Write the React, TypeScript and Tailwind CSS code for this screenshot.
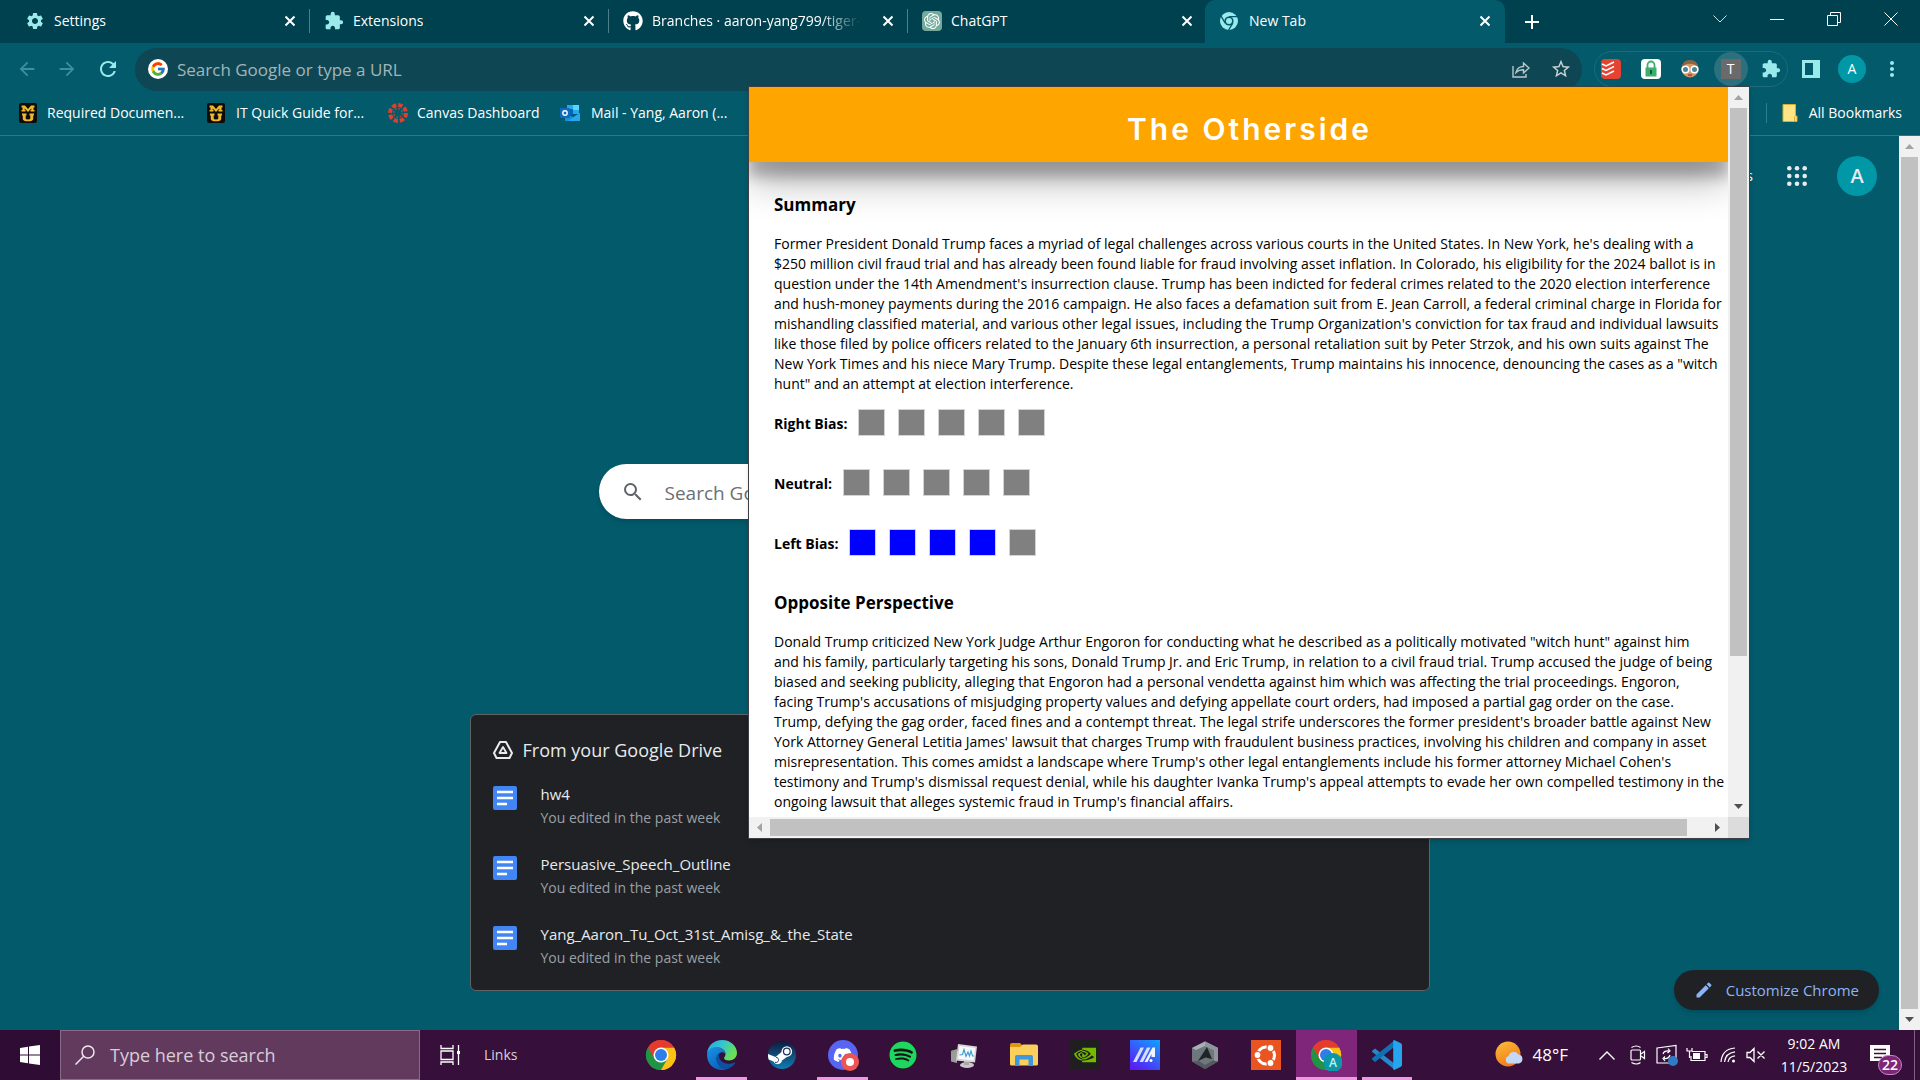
import React from "react";
import { FaGithub, FaDiscord, FaSpotify } from "react-icons/fa";
import { FcGoogle } from "react-icons/fc";
import {
  MdArrowBack,
  MdArrowForward,
  MdEdit,
  MdExtension,
  MdMoreVert,
  MdRefresh,
  MdSearch,
  MdSettings,
  MdStarBorder,
} from "react-icons/md";
import { SiOpenai, SiNvidia } from "react-icons/si";

/* ---------- icons ---------- */

function CloseX() {
  return (
    <svg viewBox="0 0 12 12" className="size-3" fill="none" stroke="currentColor" strokeWidth="2">
      <path d="M1.500 1.500l9 9M10.500 1.500l-9 9" />
    </svg>
  );
}

function ChromeMono() {
  return (
    <svg viewBox="0 0 20 20" className="size-5">
      <circle cx="10" cy="10" r="9" fill="#9aeaec" />
      <circle cx="10" cy="10" r="4.600" fill="#035a6b" />
      <circle cx="10" cy="10" r="3" fill="#9aeaec" />
      <path d="M10 5.600h8.400M6.200 12.200L2 5M13.800 12.200L9.600 19" stroke="#035a6b" strokeWidth="1.400" />
    </svg>
  );
}

function ChromeLogo({ badge = false }: { badge?: boolean }) {
  return (
    <svg viewBox="0 0 32 32" className="size-8">
      <path d="M16 16L3 8.500A15 15 0 0 1 29 8.500Z" fill="#e33b2e" />
      <path d="M16 16L3 8.500A15 15 0 0 0 16 31Z" fill="#229342" />
      <path d="M16 16L29 8.500A15 15 0 0 1 16 31Z" fill="#fbc116" />
      <path d="M16 8.500H29A15 15 0 0 1 16 31L22.500 19.700Z" fill="#fbc116" />
      <path d="M3 8.500L9.500 19.700 16 23.500 22.500 19.700 16 31A15 15 0 0 1 3 8.500Z" fill="#229342" />
      <path d="M3 8.500A15 15 0 0 1 29 8.500H16L9.500 19.500Z" fill="#e33b2e" />
      <circle cx="16" cy="16" r="7.500" fill="#fff" />
      <circle cx="16" cy="16" r="6" fill="#2f7de9" />
      {badge && (
        <>
          <circle cx="23" cy="23.500" r="9.500" fill="#0b97a7" />
          <text x="23" y="28" textAnchor="middle" fontSize="12" fontWeight="600" fill="#c9eef2" fontFamily="Open Sans">
            A
          </text>
        </>
      )}
    </svg>
  );
}

function EdgeLogo() {
  return (
    <svg viewBox="0 0 32 32" className="size-8">
      <defs>
        <linearGradient id="edgeTop" x1="0" y1="0" x2="1" y2="0.5">
          <stop offset="0" stopColor="#1fa5e6" />
          <stop offset="0.5" stopColor="#35c6cf" />
          <stop offset="1" stopColor="#6be04f" />
        </linearGradient>
        <linearGradient id="edgeBody" x1="0" y1="0" x2="0.6" y2="1">
          <stop offset="0" stopColor="#1b93e4" />
          <stop offset="1" stopColor="#0c61bd" />
        </linearGradient>
      </defs>
      <path d="M1 15C1.500 6.500 8 1 16 1c9 0 15 6.500 15 13 0 4.500-3.500 7.500-8 7.500-3.500 0-5-1.500-5-2.500 0-.8 1.500-1.500 1.500-4C19.500 11.500 16 8.500 11.500 8.500 6 8.500 2 11.500 1 15Z" fill="url(#edgeTop)" />
      <path d="M1 16c0-4.500 4.500-8 9.500-8 5.500 0 9 3.500 9 7-1-1.800-2.800-2-4-1.800-4 1-6 5.500-4 10.300 2 4.500 6 6.800 8.500 7-1.200.4-2.500.5-4 .5C7.500 31 1 24.500 1 16Z" fill="url(#edgeBody)" />
      <path d="M14.500 13.500c-3.800 1.500-5.200 6-3.200 10.500 2 4.200 6 6.800 9.200 6.300 4-.8 7.500-4 8.500-6.300.3-.8-.3-1-1-.6-2 1-3.500 1.300-5.500 1.300-5.500 0-9.500-3.700-9.500-7.700 0-1.500.6-2.800 1.500-3.500Z" fill="#0d4fa0" />
    </svg>
  );
}

function SteamLogo() {
  return (
    <svg viewBox="0 0 28 28" className="size-7">
      <defs>
        <linearGradient id="steamBg" x1="0" y1="0" x2="0" y2="1">
          <stop offset="0" stopColor="#101a3c" />
          <stop offset="1" stopColor="#0f7db5" />
        </linearGradient>
      </defs>
      <circle cx="14" cy="14" r="14" fill="url(#steamBg)" />
      <path d="M0 13L7.500 16l6-5 8 3-7.500 5.500A4.500 4.500 0 0 1 5.500 20.500L.7 18.500Q-.2 15.500 0 13Z" fill="#fff" />
      <circle cx="18.800" cy="10.500" r="5.300" fill="#fff" />
      <circle cx="18.800" cy="10.500" r="3.900" fill="#15305e" />
      <circle cx="18.800" cy="10.500" r="2.700" fill="#fff" />
      <path d="M7 21.300a2.600 2.600 0 1 0 1-5" fill="none" stroke="#15305e" strokeWidth="0.900" />
    </svg>
  );
}

function DiscordLogo() {
  return (
    <span className="relative flex size-[30px] items-center justify-center rounded-full bg-[#5865f2] text-white">
      <FaDiscord className="size-5" />
      <span className="absolute -right-px -bottom-px flex size-[18px] items-center justify-center rounded-full bg-[#ed5555]">
        <span className="size-2 rounded-full bg-white" />
      </span>
    </span>
  );
}

function SpotifyLogo() {
  return (
    <span className="flex size-7 items-center justify-center rounded-full bg-[#191414]">
      <FaSpotify className="size-7 text-[#1ed760]" />
    </span>
  );
}

function MonitorLogo() {
  return (
    <svg viewBox="0 0 30 30" className="size-[30px]">
      <path d="M2 11l6-2v14l-6-1.500Z" fill="#9b9b9b" />
      <path d="M2 11l3-1v2l-3 .6Z" fill="#5bc236" />
      <ellipse cx="18" cy="25" rx="7" ry="3" fill="#c9c9c9" />
      <path d="M15 20h5v5h-5Z" fill="#a9a9a9" />
      <path d="M9 4l19 2.500-2 16L7 20.500Z" fill="#d6d6d6" />
      <path d="M10.500 6l15.700 2-1.700 12.500L9 18.800Z" fill="#f6fafc" />
      <path d="M10.500 15l3-.5 1.500-5 2 7 2-4.500 1.500 4 1.500-5 1.500 5h1.500" fill="none" stroke="#3a9bd0" strokeWidth="1.100" />
    </svg>
  );
}

function FolderLogo() {
  return (
    <svg viewBox="0 0 30 30" className="size-[30px]">
      <path d="M1 5q0-2 2-2h8l3 3v5H1Z" fill="#dc9a0c" />
      <path d="M1 7h10l3-2.500h13q2 0 2 2V24q0 1.500-1.500 1.500H2.500Q1 25.500 1 24Z" fill="#fbcf5c" />
      <path d="M6 26V17q0-2 2-2h14q2 0 2 2v9h-4.500v-6.500h-9V26Z" fill="#3f97dd" />
    </svg>
  );
}

function AsusLogo() {
  return (
    <svg viewBox="0 0 30 30" className="size-[30px]">
      <defs>
        <linearGradient id="asusBg" x1="0.9" y1="0" x2="0.2" y2="1">
          <stop offset="0" stopColor="#149cff" />
          <stop offset="1" stopColor="#5a1cf5" />
        </linearGradient>
      </defs>
      <rect width="30" height="30" fill="url(#asusBg)" />
      <path d="M3 22L10.500 7.500h3.500L6.500 22ZM9.500 22L17 7.500h3.500L13 22Z" fill="#d5dcff" />
      <path d="M14.500 22L22.500 7.500H25v9.500h-3.500v-3L17.500 22Z" fill="#f2f4ff" />
      <circle cx="21" cy="20.500" r="1.500" fill="#fff" />
    </svg>
  );
}

function ArmouryLogo() {
  return (
    <svg viewBox="0 0 30 30" className="size-[30px]">
      <path d="M15 1.500L28 8v13.500L15 29 2 21.500V8Z" fill="#6f777c" />
      <path d="M15 1.500L28 8l-4 2-9-4-9 4L2 8Z" fill="#a7b0b5" />
      <path d="M15 1.500V6l9 4v11l4 .5V8Z" fill="#8d969b" />
      <path d="M2 21.500l7-.5 6 4 8-4.500 5 1L15 29Z" fill="#525a5f" />
      <path d="M17 7l5 12-6.500-1.500L8 21Z" fill="#1f2427" />
    </svg>
  );
}

function UbuntuLogo() {
  return (
    <svg viewBox="0 0 30 30" className="size-[30px]">
      <rect width="30" height="30" fill="#e95420" />
      <circle cx="15" cy="15.500" r="8.500" fill="none" stroke="#fff" strokeWidth="3" />
      {[
        [19.5, 8],
        [6.5, 15],
        [19.5, 23],
      ].map(([x, y]) => (
        <circle key={`${x}-${y}`} cx={x} cy={y} r="3.500" fill="#fff" stroke="#e95420" strokeWidth="1.200" />
      ))}
    </svg>
  );
}

function CodeLogo() {
  return (
    <svg viewBox="0 0 30 30" className="size-[30px]">
      <path d="M0 11l3-2.500L23 24v6L1 12.500Q-.5 11.500 0 11Z" fill="#2489ca" />
      <path d="M0 19.500L3 22 23 6.500V0L.5 18Q-.5 19 0 19.500Z" fill="#1070b3" />
      <path d="M22 0l6.500 3Q30 3.700 30 5.200v19.600q0 1.500-1.500 2.200L22 30q-.8-.3-.8-1.500v-27Q21.200.3 22 0Z" fill="#25a5ee" />
    </svg>
  );
}

function DriveIcon() {
  return (
    <svg viewBox="0 0 20 18" className="h-[18px] w-5" fill="none" stroke="#e8eaed" strokeWidth="2" strokeLinejoin="round">
      <path d="M7 1h6l6 11-2.500 5h-13L1 12Z" />
      <path d="M10 6l3.500 6h-7Z" strokeWidth="1.800" />
    </svg>
  );
}

function DocsIcon() {
  return (
    <svg viewBox="0 0 24 24" className="size-6">
      <rect width="24" height="24" rx="2" fill="#4285f4" />
      <path d="M4 6h16M4 12h16M4 18h10" stroke="#fff" strokeWidth="2.400" />
    </svg>
  );
}

function AppsGrid() {
  return (
    <svg viewBox="0 0 20 20" className="size-5" fill="#e8eaed">
      {[2.3, 10, 17.7].map((y) => [2.3, 10, 17.7].map((x) => <circle key={`${x}-${y}`} cx={x} cy={y} r="2.300" />))}
    </svg>
  );
}

function MuIcon() {
  return (
    <svg viewBox="0 0 18 20" className="h-5 w-[18px]" role="img" aria-label="MU">
      <rect width="18" height="20" rx="2" fill="#0c0c0c" />
      <path
        d="M2.500 2.500H6L9 6l3-3.500h3.500v2h-1V7h1v1.500h-4V7h.8V5.500L9 9 5.700 5.500V7h.8v1.500h-4V7h1V4.500h-1ZM3 10.500h4.500v2h-.8v3q0 1 2.300 1t2.300-1v-3h-.8v-2H15v2h-.8v3.500Q14 18.300 9 18.300T3.800 16v-3.500H3Z"
        fill="#f1b82d"
      />
    </svg>
  );
}

function CanvasIcon() {
  return (
    <svg viewBox="0 0 20 20" className="size-5">
      <circle cx="10" cy="10" r="8" fill="none" stroke="#e13f2b" strokeWidth="4" strokeDasharray="4.300 1.983" />
      <circle cx="10" cy="10" r="4.300" fill="none" stroke="#e13f2b" strokeWidth="1.400" strokeDasharray="1.400 1.977" />
    </svg>
  );
}

function OutlookIcon() {
  return (
    <svg viewBox="0 0 20 20" className="size-5">
      <path d="M7 2h12v9H7Z" fill="#28a8ea" />
      <path d="M13 2h6v5h-6Z" fill="#50d9ff" />
      <path d="M7 6h6v6H7Z" fill="#0364b8" />
      <path d="M5 10l8 4 7-4v8H5Z" fill="#1490df" />
      <path d="M20 10L8 18h12Z" fill="#28a8ea" />
      <rect y="5" width="10" height="10" rx="1" fill="#0f6cbd" />
      <circle cx="5" cy="10" r="2.200" fill="none" stroke="#fff" strokeWidth="1.400" />
    </svg>
  );
}

/* ---------- browser frame ---------- */

const tabs: { title: string; icon: React.ReactNode; fade?: boolean }[] = [
  { title: "Settings", icon: <MdSettings className="size-5 text-[#9aeaec]" /> },
  { title: "Extensions", icon: <MdExtension className="size-5 text-[#9aeaec]" /> },
  { title: "Branches · aaron-yang799/tiger-", icon: <FaGithub className="size-5 text-white" />, fade: true },
  {
    title: "ChatGPT",
    icon: (
      <span className="flex size-5 items-center justify-center rounded-sm bg-[#74aa9c] text-white">
        <SiOpenai className="size-4" />
      </span>
    ),
  },
];

function TabStrip() {
  return (
    <header className="flex h-[43px] shrink-0 bg-[#00414f] pl-[11px] text-sm text-white">
      {tabs.map((tab, i) => (
        <div key={tab.title} className="flex h-full max-w-[299px] flex-1 items-center pb-0.5 pl-[14px]">
          <button className="flex min-w-0 flex-1 items-center gap-[9px] text-left">
            <span className="shrink-0">{tab.icon}</span>
            <span
              className={
                tab.fade
                  ? "whitespace-nowrap [mask-image:linear-gradient(to_right,black_80%,transparent)]"
                  : "truncate"
              }
            >
              {tab.title}
            </span>
          </button>
          <button aria-label={`Close ${tab.title}`} className="mr-[13px] ml-2 shrink-0">
            <CloseX />
          </button>
          <span className={i < 3 ? "h-6 w-px bg-[#4e7f88]" : "w-px"} />
        </div>
      ))}
      <div className="-ml-0.5 flex h-full w-[300px] items-center rounded-t-[10px] bg-[#035a6b] px-[14px] pb-0.5">
        <button className="flex flex-1 items-center gap-2.5 text-left">
          <ChromeMono />
          New Tab
        </button>
        <button aria-label="Close New Tab">
          <CloseX />
        </button>
      </div>
      <button aria-label="New tab" className="ml-5 flex items-center">
        <svg viewBox="0 0 14 14" className="size-3.5" stroke="#fff" strokeWidth="2">
          <path d="M7 0v14M0 7h14" />
        </svg>
      </button>
      <div className="ml-auto flex h-[38px] items-stretch">
        <button aria-label="Search tabs" className="flex w-[57px] items-center justify-center">
          <svg viewBox="0 0 14 8" className="h-2 w-3.5" fill="none" stroke="#cfe0e3">
            <path d="M.5.5L7 7 13.500.5" />
          </svg>
        </button>
        <button aria-label="Minimize" className="flex w-[57px] items-center justify-center">
          <span className="h-px w-3.5 bg-white" />
        </button>
        <button aria-label="Restore" className="flex w-[57px] items-center justify-center">
          <svg viewBox="0 0 14 14" className="size-3.5" fill="none" stroke="#fff">
            <path d="M.5 3.500h10v10H.5ZM3.500 3.500v-3h10v10h-3" />
          </svg>
        </button>
        <button aria-label="Close" className="flex w-[58px] items-center justify-center">
          <svg viewBox="0 0 14 14" className="size-3.5" fill="none" stroke="#fff">
            <path d="M.5.5l13 13M13.500.5l-13 13" />
          </svg>
        </button>
      </div>
    </header>
  );
}

function Toolbar() {
  return (
    <div className="flex h-[49px] shrink-0 items-center pt-1 pr-4 pb-px pl-4 text-[#9aeaec]">
      <button aria-label="Back" className="w-10 text-[#3d8f9c]">
        <MdArrowBack className="size-[22px]" />
      </button>
      <button aria-label="Forward" className="w-10 text-[#3d8f9c]">
        <MdArrowForward className="size-[22px]" />
      </button>
      <button aria-label="Reload" className="w-[39px]">
        <MdRefresh className="size-6" />
      </button>
      <div className="flex h-[43px] flex-1 items-center rounded-full bg-[#0e4753] pr-px pl-[13px]">
        <span className="flex size-5 items-center justify-center rounded-full bg-white">
          <FcGoogle className="size-4" />
        </span>
        <input
          aria-label="Search Google or type a URL"
          placeholder="Search Google or type a URL"
          className="ml-[9px] h-full flex-1 bg-transparent text-[17px] outline-none placeholder:text-[#a3b5ba]"
        />
        <button aria-label="Share" className="flex w-10 justify-center">
          <svg viewBox="0 0 18 18" className="size-[18px]" fill="none" stroke="#b9c6ca" strokeWidth="1.400">
            <path d="M1 6v11h13v-3M4 12.500C5 8 8 6.500 11.500 6.500V3l5.500 5-5.500 5V9.800C8.500 9.800 6 10.500 4 12.500Z" />
          </svg>
        </button>
        <button aria-label="Bookmark this tab" className="flex w-10 justify-center">
          <MdStarBorder className="size-[22px] text-[#c8d3d6]" />
        </button>
      </div>
      <div className="ml-3 flex h-9 w-[194px] items-center justify-between rounded-full border border-[#1d6c7b] px-1.5">
        <button aria-label="Todoist" className="flex size-5 items-center justify-center rounded-sm bg-[#e44332]">
          <svg viewBox="0 0 20 20" className="size-5" fill="none" stroke="#fff" strokeWidth="1.500">
            <path d="M1 5l4 2 8-4M1 9.500l4 2 8-4M1 14l4 2 8-4" />
          </svg>
        </button>
        <button aria-label="Password lock" className="flex size-5 items-center justify-center rounded-sm bg-white">
          <svg viewBox="0 0 20 20" className="size-5">
            <path d="M6.500 9V6a3.500 3.500 0 0 1 7 0v3" fill="none" stroke="#3dae6e" strokeWidth="1.800" />
            <rect x="4.500" y="8.500" width="11" height="9" fill="#3dae6e" />
            <path d="M10 11v4" stroke="#0b5a33" strokeWidth="2" />
          </svg>
        </button>
        <button aria-label="Reader extension">
          <svg viewBox="0 0 20 20" className="size-5">
            <circle cx="10" cy="10" r="8.500" fill="#d09568" />
            <path d="M2 9Q2 1 10 1t8 8Q14 4 10 5 6 4 2 9Z" fill="#8b6440" />
            <circle cx="5.500" cy="10.500" r="3.300" fill="#4a8794" stroke="#fff" strokeWidth="1.600" />
            <circle cx="14.500" cy="10.500" r="3.300" fill="#4a8794" stroke="#fff" strokeWidth="1.600" />
            <path d="M8 16h4" stroke="#b33" strokeWidth="1.500" />
          </svg>
        </button>
        <button aria-label="The Otherside" className="-mx-1.5 flex size-[34px] items-center justify-center rounded-full bg-[#2c6f7d]">
          <span className="flex size-5 items-center justify-center bg-[#6a6a6a] text-sm leading-none text-white">T</span>
        </button>
        <button aria-label="Extensions">
          <MdExtension className="size-5" />
        </button>
      </div>
      <button aria-label="Side panel" className="ml-[14px] flex h-[18px] w-[18px] border-[3px] border-[#9aeaec]">
        <span className="ml-auto h-full w-1 bg-[#9aeaec]" />
      </button>
      <button aria-label="Profile" className="ml-[18px] flex size-7 items-center justify-center rounded-full bg-[#0097a7] text-sm text-white">
        A
      </button>
      <button aria-label="Menu" className="ml-[14px]">
        <MdMoreVert className="size-6" />
      </button>
    </div>
  );
}

function BookmarksBar() {
  return (
    <nav className="flex h-11 shrink-0 items-center border-b border-[#287a88] pb-0.5 pr-[18px] pl-[19px] text-sm text-white">
      <a href="#required" className="flex w-[188px] items-center gap-2.5">
        <MuIcon /> Required Documen...
      </a>
      <a href="#guide" className="flex w-[181px] items-center gap-[11px]">
        <MuIcon /> IT Quick Guide for...
      </a>
      <a href="#canvas" className="flex w-[172px] items-center gap-[9px]">
        <CanvasIcon /> Canvas Dashboard
      </a>
      <a href="#mail" className="flex items-center gap-[11px]">
        <OutlookIcon /> Mail - Yang, Aaron (...
      </a>
      <a href="#all" className="ml-auto flex items-center gap-[11px]">
        <span className="mr-1 h-5 w-px bg-[#2d7f8c]" />
        <svg viewBox="0 0 16 18" className="h-[18px] w-4">
          <path d="M1 .5h12.500V12H15v5.500H1Z" fill="#ffe484" stroke="#d9ad2f" />
          <path d="M12.500 12.500v5" stroke="#d9ad2f" />
        </svg>
        All Bookmarks
      </a>
    </nav>
  );
}

/* ---------- scrollbar ---------- */

function Arrow({ dir, dark }: { dir: "up" | "down" | "left" | "right"; dark?: boolean }) {
  const points = { up: "0,5 4.500,0 9,5", down: "0,0 4.500,5 9,0", left: "5,0 0,4.500 5,9", right: "0,0 5,4.500 0,9" }[dir];
  const upright = dir === "up" || dir === "down";
  return (
    <button aria-label={`Scroll ${dir}`} className="flex size-[21px] shrink-0 items-center justify-center">
      <svg viewBox={upright ? "0 0 9 5" : "0 0 5 9"} className={upright ? "h-[5px] w-[9px]" : "h-[9px] w-[5px]"}>
        <polygon points={points} fill={dark ? "#505050" : "#a3a3a3"} />
      </svg>
    </button>
  );
}

/* ---------- new tab page ---------- */

const files = ["hw4", "Persuasive_Speech_Outline", "Yang_Aaron_Tu_Oct_31st_Amisg_&_the_State"];

function NewTabPage() {
  return (
    <div className="flex min-h-0 flex-1">
      <main className="relative flex flex-1 flex-col">
        <div className="flex h-20 shrink-0 items-center justify-end pr-[22px] text-[#e8eaed]">
          <a href="#images" className="text-sm text-white">
            Images
          </a>
          <button aria-label="Google apps" className="ml-[34px]">
            <AppsGrid />
          </button>
          <button aria-label="Account" className="ml-[30px] flex size-10 items-center justify-center rounded-full bg-[#0097a7] text-xl font-semibold">
            A
          </button>
        </div>
        <label className="mx-auto mt-[248px] flex h-[55px] w-full max-w-[702px] shrink-0 items-center rounded-full bg-white pl-[22px] shadow-md">
          <MdSearch className="size-6 text-[#5f6368]" />
          <input
            aria-label="Search Google"
            placeholder="Search Google or type a URL"
            className="ml-5 h-full flex-1 bg-transparent pt-0.5 text-[19px] outline-none placeholder:text-[#6b6f74]"
          />
        </label>
        <section className="mx-auto mt-[195px] w-full max-w-[960px] shrink-0 rounded-md border border-[#5f6368] bg-[#202124] px-[22px] py-5">
          <h2 className="flex h-[30px] items-center gap-2.5 text-lg text-[#e8eaed]">
            <DriveIcon /> From your Google Drive
          </h2>
          <ul className="mt-[17px] flex flex-col gap-[22px]">
            {files.map((name) => (
              <li key={name}>
                <a href={`#${name}`} className="flex items-start gap-6">
                  <span className="mt-1">
                    <DocsIcon />
                  </span>
                  <span className="flex flex-col text-[15px] leading-6 text-[#e8eaed]">
                    {name}
                    <span className="text-sm leading-6 text-[#9aa0a6]">You edited in the past week</span>
                  </span>
                </a>
              </li>
            ))}
          </ul>
        </section>
        <button className="absolute right-5 bottom-5 flex h-10 items-center gap-3 rounded-full bg-[#202124] px-5 text-[15px] text-[#8ab4f8] shadow-md">
          <MdEdit className="size-5" />
          Customize Chrome
        </button>
      </main>
      <div className="flex w-[21px] flex-col bg-[#f1f1f1]">
        <Arrow dir="up" />
        <div className="mx-0.5 flex-1 bg-[#c1c1c1]" />
        <Arrow dir="down" dark />
      </div>
    </div>
  );
}

/* ---------- extension popup ---------- */

const summary = [
  "Former President Donald Trump faces a myriad of legal challenges across various courts in the United States. In New York, he's dealing with a",
  "$250 million civil fraud trial and has already been found liable for fraud involving asset inflation. In Colorado, his eligibility for the 2024 ballot is in",
  "question under the 14th Amendment's insurrection clause. Trump has been indicted for federal crimes related to the 2020 election interference",
  "and hush-money payments during the 2016 campaign. He also faces a defamation suit from E. Jean Carroll, a federal criminal charge in Florida for",
  "mishandling classified material, and various other legal issues, including the Trump Organization's conviction for tax fraud and individual lawsuits",
  "like those filed by police officers related to the January 6th insurrection, a personal retaliation suit by Peter Strzok, and his own suits against The",
  'New York Times and his niece Mary Trump. Despite these legal entanglements, Trump maintains his innocence, denouncing the cases as a "witch',
  'hunt" and an attempt at election interference.',
];

const opposite = [
  'Donald Trump criticized New York Judge Arthur Engoron for conducting what he described as a politically motivated "witch hunt" against him',
  "and his family, particularly targeting his sons, Donald Trump Jr. and Eric Trump, in relation to a civil fraud trial. Trump accused the judge of being",
  "biased and seeking publicity, alleging that Engoron had a personal vendetta against him which was affecting the trial proceedings. Engoron,",
  "facing Trump's accusations of misjudging property values and defying appellate court orders, had imposed a partial gag order on the case.",
  "Trump, defying the gag order, faced fines and a contempt threat. The legal strife underscores the former president's broader battle against New",
  "York Attorney General Letitia James' lawsuit that charges Trump with fraudulent business practices, involving his children and company in asset",
  "misrepresentation. This comes amidst a landscape where Trump's other legal entanglements include his former attorney Michael Cohen's",
  "testimony and Trump's dismissal request denial, while his daughter Ivanka Trump's appeal attempts to evade her own compelled testimony in the",
  "ongoing lawsuit that alleges systemic fraud in Trump's financial affairs.",
];

const biases = [
  { label: "Right Bias:", score: 0 },
  { label: "Neutral:", score: 0 },
  { label: "Left Bias:", score: 4 },
];

function Popup() {
  return (
    <section className="absolute top-[86px] right-[170px] flex w-[1002px] flex-col border border-[#3c4043] bg-white text-black shadow-md">
      <div className="flex">
        <article className="min-w-0 flex-1 overflow-hidden pb-[5px]">
          <h1 className="flex h-[75px] items-center justify-center bg-[#ffa500] pt-2.5 pl-[22px] font-['Inter',sans-serif] text-[30px] font-semibold tracking-widest text-white shadow-[0_19px_38px_rgba(0,0,0,0.3),0_15px_12px_rgba(0,0,0,0.22)]">
            The Otherside
          </h1>
          <div className="pl-[25px] text-sm leading-5 whitespace-pre">
            <h2 className="mt-[31px] text-[17px] leading-6 font-bold">Summary</h2>
            <p className="mt-[17px]">{summary.join("\n")}</p>
            <div className="mt-[15px] flex flex-col gap-[33px]">
              {biases.map((bias) => (
                <div key={bias.label} className="flex items-center gap-[11px]">
                  <span className="pt-0.5 font-bold">{bias.label}</span>
                  <div className="flex gap-[13px]">
                    {[0, 1, 2, 3, 4].map((n) => (
                      <span
                        key={n}
                        className={
                          n < bias.score
                            ? "size-[27px] border border-[#d3d3d3] bg-[#0000ff]"
                            : "size-[27px] border border-[#d3d3d3] bg-[#808080]"
                        }
                      />
                    ))}
                  </div>
                </div>
              ))}
            </div>
            <h2 className="mt-[35px] text-[17px] leading-6 font-bold">Opposite Perspective</h2>
            <p className="mt-[17px]">{opposite.join("\n")}</p>
          </div>
        </article>
        <div className="flex w-[21px] flex-col bg-[#f1f1f1]">
          <Arrow dir="up" />
          <div className="mx-0.5 flex-[547] bg-[#c1c1c1]" />
          <div className="flex-[140]" />
          <Arrow dir="down" dark />
        </div>
      </div>
      <div className="flex h-[21px] bg-[#f1f1f1]">
        <Arrow dir="left" />
        <div className="my-0.5 flex-[918] bg-[#c1c1c1]" />
        <div className="flex-[20]" />
        <Arrow dir="right" dark />
        <div className="w-[21px] bg-[#dcdcdc]" />
      </div>
    </section>
  );
}

/* ---------- taskbar ---------- */

const apps: { name: string; icon: React.ReactNode; running?: boolean; active?: boolean }[] = [
  { name: "Google Chrome", icon: <ChromeLogo /> },
  { name: "Microsoft Edge", icon: <EdgeLogo />, running: true },
  { name: "Steam", icon: <SteamLogo /> },
  { name: "Discord", icon: <DiscordLogo />, running: true },
  { name: "Spotify", icon: <SpotifyLogo /> },
  { name: "System Monitor", icon: <MonitorLogo /> },
  { name: "File Explorer", icon: <FolderLogo /> },
  {
    name: "NVIDIA",
    icon: (
      <span className="flex size-[30px] items-center justify-center bg-[#1f1f1f] text-[#76b900]">
        <SiNvidia className="size-[22px]" />
      </span>
    ),
  },
  { name: "MyASUS", icon: <AsusLogo /> },
  { name: "Armoury Crate", icon: <ArmouryLogo /> },
  { name: "Ubuntu", icon: <UbuntuLogo /> },
  { name: "Chrome profile A", icon: <ChromeLogo badge />, running: true, active: true },
  { name: "Visual Studio Code", icon: <CodeLogo />, running: true },
];

function Taskbar() {
  return (
    <footer className="flex h-[50px] shrink-0 items-stretch bg-[#36103a] text-white">
      <button aria-label="Start" className="flex w-[60px] items-center justify-center bg-[#2f0c33]">
        <svg viewBox="0 0 20 20" className="size-5" fill="#fff">
          <path d="M0 3l8-1.200v7.700H0ZM9 1.600L20 0v9.500H9ZM0 10.500h8v7.700L0 17ZM9 10.500h11V20L9 18.400Z" />
        </svg>
      </button>
      <label className="flex w-[360px] items-center border border-[#8a6a88] bg-[#623a5e] pl-[14px]">
        <svg viewBox="0 0 20 20" className="size-5" fill="none" stroke="#f0e8f0" strokeWidth="1.500">
          <circle cx="13" cy="7" r="6" />
          <path d="M8.700 11.300L.5 19.500" />
        </svg>
        <input
          aria-label="Type here to search"
          placeholder="Type here to search"
          className="ml-[15px] h-full min-w-0 flex-1 bg-transparent text-[18px] outline-none placeholder:text-[#d9cdd8]"
        />
      </label>
      <button aria-label="Task view" className="flex w-[60px] items-center justify-center">
        <svg viewBox="0 0 20 20" className="size-5" fill="none" stroke="#fff" strokeWidth="1.300">
          <path d="M1 0v3.500h12V0M1 6h12v8.500H1ZM1 20v-3h12v3M18.500 0v20" />
          <rect x="17" y="6" width="3" height="3" fill="#fff" stroke="none" />
        </svg>
      </button>
      <span className="flex w-[151px] items-center pl-1 text-sm text-[#d9cfda]">Links</span>
      <div className="flex w-[786px]">
        {apps.map((app) => (
          <button
            key={app.name}
            aria-label={app.name}
            className={
              app.active
                ? "relative flex flex-1 items-center justify-center bg-[#80267a]"
                : "relative flex flex-1 items-center justify-center"
            }
          >
            {app.icon}
            {app.running && (
              <span
                className={
                  app.active
                    ? "absolute inset-x-0 bottom-0 h-[3px] bg-[#ee98e0]"
                    : "absolute inset-x-[5px] bottom-0 h-[3px] bg-[#ee98e0]"
                }
              />
            )}
          </button>
        ))}
      </div>
      <div className="ml-auto flex items-center">
        <button className="flex items-center gap-[9px] text-[17px]">
          <svg viewBox="0 0 30 28" className="h-7 w-[30px]">
            <defs>
              <linearGradient id="sun" x1="0" y1="0" x2="0.5" y2="1">
                <stop offset="0" stopColor="#fbc03a" />
                <stop offset="1" stopColor="#f17a1a" />
              </linearGradient>
            </defs>
            <circle cx="14" cy="13" r="12.500" fill="url(#sun)" />
            <path d="M14 22.500a4 4 0 0 1 .5-7.500 5.500 5.500 0 0 1 10-1.500 4.600 4.600 0 0 1 .5 9Z" fill="#c3d8f5" />
          </svg>
          48°F
        </button>
        <button aria-label="Show hidden icons" className="ml-[31px]">
          <svg viewBox="0 0 16 9" className="h-[9px] w-4" fill="none" stroke="#fff" strokeWidth="1.400">
            <path d="M.5 8.500L8 1l7.500 7.500" />
          </svg>
        </button>
        <button aria-label="Meet now" className="ml-[15px]">
          <svg viewBox="0 0 16 20" className="h-5 w-4" fill="none" stroke="#fff" strokeWidth="1.200">
            <rect x="1" y="5" width="9.500" height="10" rx="1" />
            <path d="M11 9l3.500-2.500v7L11 11M1.500 2.500q5-3 9 0M1.500 17.500q5 3 9 0" />
          </svg>
        </button>
        <button aria-label="Updates" className="ml-2.5">
          <svg viewBox="0 0 22 22" className="size-[22px]" fill="none" stroke="#fff" strokeWidth="1.200">
            <path d="M1 4l19-2.500V19H1ZM7 10q1-3.500 6-3M12 4.500l2 2.500-2.500 2M14 11q-1 4-6 3.500M9 17l-2-2.500 2-2" />
            <circle cx="17" cy="17" r="5" fill="#2f7bc4" stroke="none" />
          </svg>
        </button>
        <button aria-label="Battery" className="ml-2">
          <svg viewBox="0 0 22 16" className="h-4 w-[22px]" fill="none" stroke="#fff" strokeWidth="1.200">
            <path d="M6 4.500h13v9H5V9M19.500 7.500H21v3h-1.500M1 1v3h5V1M3.500 4v7" />
            <rect x="7" y="6" width="7" height="6" fill="#fff" stroke="none" />
          </svg>
        </button>
        <button aria-label="Network" className="ml-3">
          <svg viewBox="0 0 16 16" className="size-4" fill="none" stroke="#fff" strokeWidth="1.200">
            <path d="M1 15Q2 2 15 1M4.500 15Q5.500 6 15 4.800M8 15q.8-5.500 7-6.200" />
            <circle cx="13.500" cy="14" r="1.500" fill="#fff" stroke="none" />
          </svg>
        </button>
        <button aria-label="Muted" className="ml-2.5">
          <svg viewBox="0 0 20 16" className="h-4 w-5" fill="none" stroke="#fff" strokeWidth="1.300">
            <path d="M1 5.500h3l4-4v13l-4-4H1ZM11.500 4.500l7 7M18.500 4.500l-7 7" />
          </svg>
        </button>
        <button className="ml-[14px] w-[68px] text-center text-[14px] leading-[23px] whitespace-nowrap">
          <span className="block">9:02 AM</span>
          <span className="block">11/5/2023</span>
        </button>
        <button aria-label="Notifications" className="relative ml-[22px] h-10 w-8">
          <svg viewBox="0 0 20 20" className="size-5">
            <path d="M0 0h20v16h-7l-3 4v-4H0Z" fill="#fff" />
            <path d="M4 4.500h12M4 8.500h12M4 12.500h8" stroke="#36103a" strokeWidth="1.400" />
          </svg>
          <span className="absolute right-0 bottom-0 flex h-5 w-6 items-center justify-center rounded-full border border-[#c58ac2] bg-[#80267a] text-sm font-semibold">
            22
          </span>
        </button>
        <span className="mr-[5px] ml-3 h-[50px] w-px bg-[#7b637d]" />
      </div>
    </footer>
  );
}

export default function App() {
  return (
    <div className="relative flex h-screen flex-col overflow-hidden bg-[#035a6b] font-['Segoe_UI','Open_Sans','Noto_Sans',sans-serif]">
      <TabStrip />
      <Toolbar />
      <BookmarksBar />
      <NewTabPage />
      <Taskbar />
      <Popup />
    </div>
  );
}
